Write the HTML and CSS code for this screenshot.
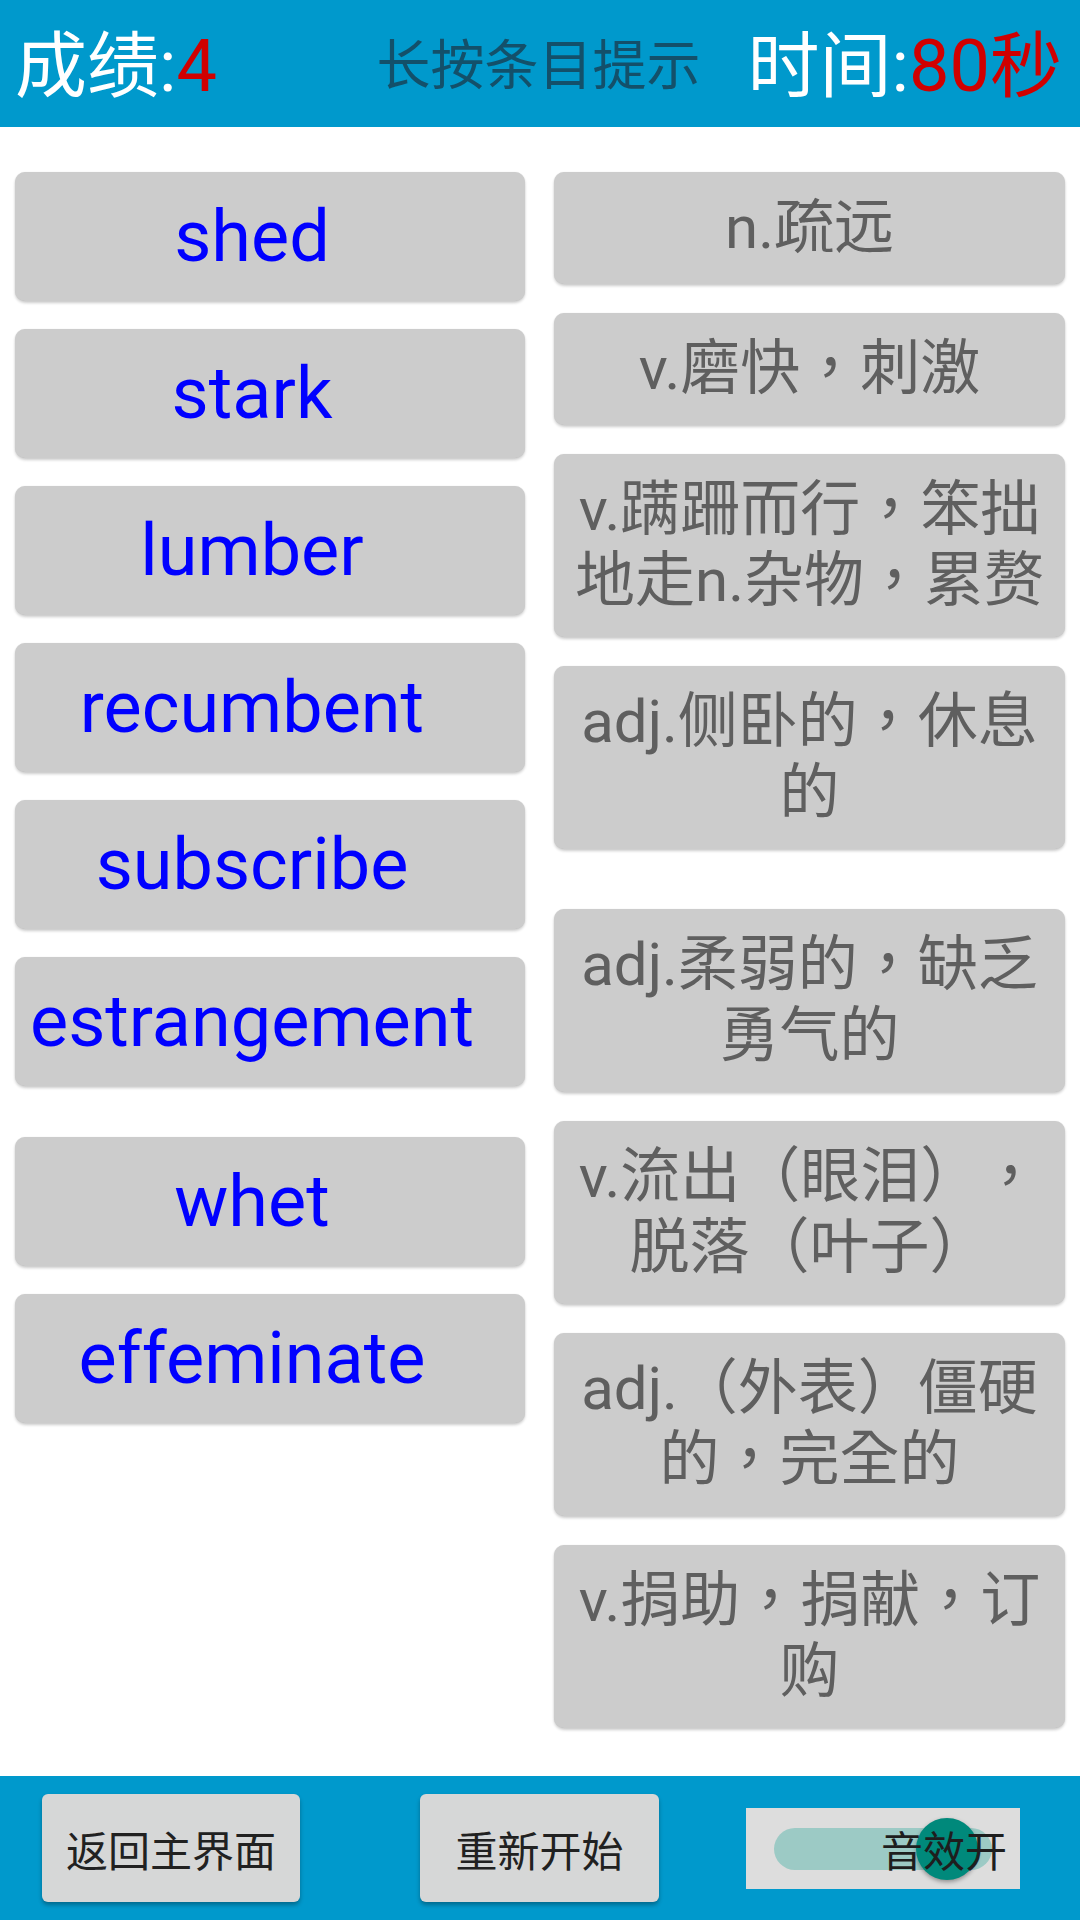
FILE: index.html
```html
<!DOCTYPE html>
<html lang="zh-CN">
<head>
  <meta charset="UTF-8" />
  <meta name="viewport" content="width=device-width, initial-scale=1.0"/>
  <title>单词连连看</title>
  <link rel="stylesheet" href="styles.css">
</head>
<body>

  <header class="topbar">
    <div class="score">成绩:<span class="hot">4</span></div>
    <div class="hint">长按条目提示</div>
    <div class="timer">时间:<span class="hot">80秒</span></div>
  </header>

  <main class="board">
    <!-- English words -->
    <div class="column words">
      <div class="card word">shed</div>
      <div class="card word">stark</div>
      <div class="card word">lumber</div>
      <div class="card word">recumbent</div>
      <div class="card word">subscribe</div>
      <div class="card word">estrangement</div>
      <div class="card word late">whet</div>
      <div class="card word">effeminate</div>
    </div>

    <!-- Chinese meanings (centred full-width punctuation) -->
    <div class="column meanings" lang="zh-Hant">
      <div class="card meaning">n.疏远</div>
      <div class="card meaning">v.磨快，刺激</div>
      <div class="card meaning">v.蹒跚而行，笨拙地走n.杂物，累赘</div>
      <div class="card meaning">adj.侧卧的，休息的</div>
      <div class="card meaning late">adj.柔弱的，缺乏勇气的</div>
      <div class="card meaning">v.流出（眼泪），脱落（叶子）</div>
      <div class="card meaning">adj.（外表）僵硬的，完全的</div>
      <div class="card meaning">v.捐助，捐献，订购</div>
    </div>
  </main>

  <footer class="bottombar">
    <div class="btn btn-home">返回主界面</div>
    <div class="btn btn-restart">重新开始</div>
    <div class="sound">
      <span class="track"></span>
      <span class="thumb"></span>
      <span class="sound-label">音效开</span>
    </div>
  </footer>

</body>
</html>
```

FILE: styles.css
```css
html, body {
  margin: 0;
  padding: 0;
  width: 1080px;
  height: 1920px;
  overflow: hidden;
}

body {
  display: flex;
  flex-direction: column;
  background-color: #ffffff;
  font-family: Roboto, "Noto Sans CJK SC", sans-serif;
}

/* Top bar */
.topbar {
  flex: none;
  height: 127px;
  box-sizing: border-box;
  display: flex;
  align-items: center;
  padding: 6px 18px 0 15px;
  background-color: #0099cc;
}

.score, .timer {
  font-size: 72px;
  line-height: 1;
  color: #ffffff;
}

.hint {
  margin-left: auto;
  margin-right: 47px;
  font-size: 54px;
  line-height: 1;
  color: #13506a;
}

.hot {
  color: #d00000;
}

/* Word board */
.board {
  flex: 1;
  display: flex;
  align-items: flex-start;
  gap: 29px;
  padding: 45px 15px 0;
}

.column {
  display: flex;
  flex-direction: column;
}

.words {
  width: 510px;
  gap: 28px;
}

.meanings {
  width: 511px;
  gap: 29px;
}

.card {
  box-sizing: border-box;
  background-color: #cccccc;
  border-radius: 10px;
  box-shadow: 0 2px 3px rgba(0, 0, 0, 0.2), 0 0 1px rgba(0, 0, 0, 0.12);
  text-align: center;
}

.word {
  padding: 21px 36px 20px 0;
  font-size: 72px;
  line-height: 88px;
  color: #0000ff;
}

.word.late {
  margin-top: 23px;
}

.meaning {
  padding: 20px 16px 21px;
  font-family: Roboto, "Noto Sans CJK TC", sans-serif;
  font-size: 60px;
  line-height: 71px;
  color: #5f5f5f;
  text-spacing-trim: space-all;
}

.meaning.late {
  margin-top: 31px;
}

/* Bottom bar */
.bottombar {
  flex: none;
  height: 144px;
  box-sizing: border-box;
  display: flex;
  align-items: center;
  padding-left: 42px;
  background-color: #0099cc;
}

.btn {
  height: 108px;
  display: flex;
  align-items: center;
  justify-content: center;
  background-color: #d6d7d7;
  border-radius: 6px;
  box-shadow: 0 3px 4px rgba(0, 0, 0, 0.3);
  font-size: 42px;
  color: #212121;
}

.btn-home {
  width: 258px;
}

.btn-restart {
  width: 239px;
  margin-left: 120px;
}

.sound {
  position: relative;
  width: 274px;
  height: 81px;
  margin-left: 87px;
  box-sizing: border-box;
  display: flex;
  align-items: center;
  justify-content: flex-end;
  padding-right: 13px;
  background-color: #dddddd;
  font-size: 42px;
  color: #1e1e1e;
}

.track {
  position: absolute;
  left: 28px;
  right: 28px;
  top: 20px;
  height: 42px;
  border-radius: 21px;
  background-color: #9ccac5;
}

.thumb {
  position: absolute;
  left: 170px;
  top: 10px;
  width: 62px;
  height: 62px;
  border-radius: 50%;
  background-color: #00897b;
  box-shadow: 0 2px 4px rgba(0, 0, 0, 0.35);
}

.sound-label {
  position: relative;
}
```
